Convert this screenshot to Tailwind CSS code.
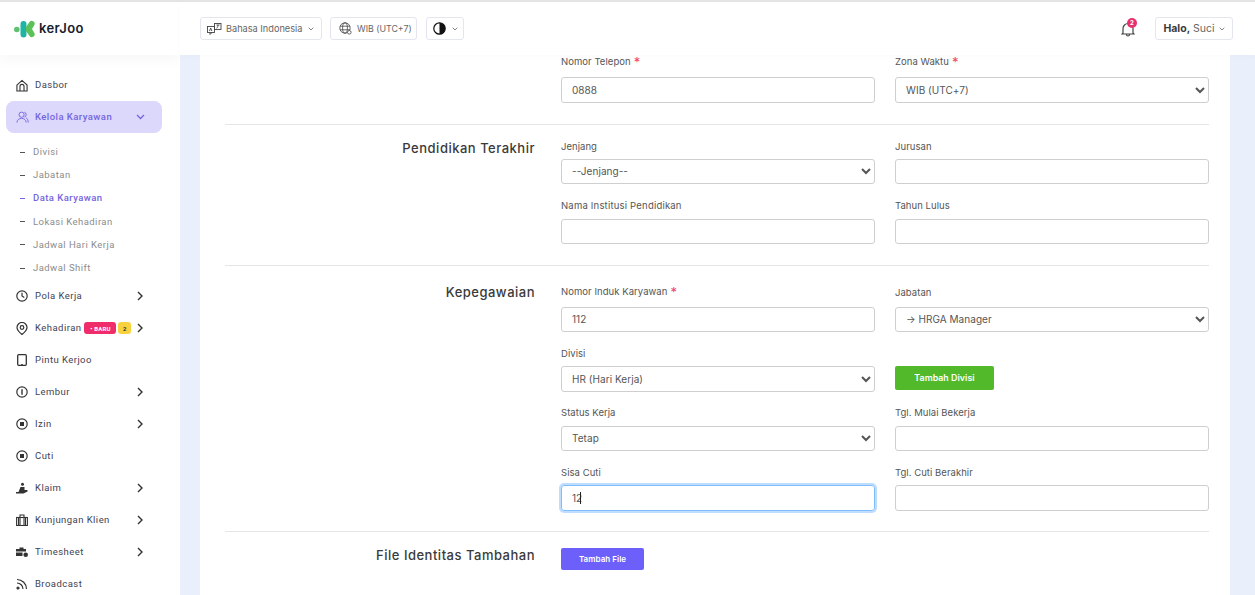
<!DOCTYPE html>
<html lang="id">
<head>
<meta charset="utf-8">
<title>Kerjoo</title>
<script src="https://cdn.jsdelivr.net/npm/@tailwindcss/browser@4"></script>
</head>
<body class="m-0 overflow-hidden bg-white font-['Inter',sans-serif]">
<div class="flex h-[595px] w-[1255px] flex-col overflow-hidden border-t-2 border-[#e4e4e4]">
<div class="flex min-h-0 flex-1">

<aside class="flex w-[180px] shrink-0 flex-col overflow-hidden bg-white font-['Roboto',sans-serif] text-[9.500px] tracking-[0.45px] text-[#3f4254]">
  <div class="flex h-[53px] shrink-0 items-center gap-[4px] pl-[14px] shadow-[0_6px_12px_rgba(0,0,0,0.03)]">
    <svg width="21" height="18" viewBox="0 0 21 18"><circle cx="2.800" cy="9.500" r="2.800" fill="#5fc16e"/><path d="M6.500 4a3 3 0 0 1 6 0v10.500a3 3 0 0 1-6 0z" fill="#1fb5a5"/><path d="M12 7l3.500-5a2.900 2.900 0 0 1 5 2.800L18 9l2.500 4.200a2.900 2.900 0 0 1-5 2.800L12 11z" fill="#5cc159"/></svg>
    <span class="font-['Inter',sans-serif] text-[13px] font-semibold tracking-[0.35px] text-[#16202c]">kerJoo</span>
  </div>
  <nav class="flex flex-col pt-[14px]">
    <a class="flex h-[32px] items-center pl-[16px]"><svg class="mr-[7px]" width="12" height="13" viewBox="0 0 13 14" fill="none" stroke="#333" stroke-width="1.200"><path d="M1 6.500 6.500 1.500 12 6.500V13H1zM4.300 13V8a2.200 2.200 0 0 1 4.400 0v5"/></svg>Dasbor</a>
    <a class="ml-[6px] mr-[18px] flex h-[32px] items-center rounded-[8px] bg-[#dcd8fb] pl-[10px] font-medium text-[#7465e0]"><svg class="mr-[6px]" width="13" height="12" viewBox="0 0 14 13" fill="none" stroke="#7465e0" stroke-width="1"><circle cx="6" cy="4" r="2.800"/><path d="M1 12.500c0-6 10-6 10 0M9 1.300a2.800 2.800 0 0 1 0 5.400M11 7.500c1.300.7 2.200 2.500 2.200 5"/></svg><span class="flex-1">Kelola Karyawan</span><svg class="mr-[17px]" width="9" height="6" viewBox="0 0 9 6" fill="none" stroke="#7465e0" stroke-width="1.300"><path d="M1 1l3.500 3.500L8 1"/></svg></a>
    <ul class="flex flex-col pb-[0.500px] pt-[7.500px] text-[#8c8c8c]">
      <li class="flex h-[23.200px] items-center gap-[8px] pl-[20px]"><span class="h-px w-[5px] bg-[#555]"></span>Divisi</li>
      <li class="flex h-[23.200px] items-center gap-[8px] pl-[20px]"><span class="h-px w-[5px] bg-[#555]"></span>Jabatan</li>
      <li class="flex h-[23.200px] items-center gap-[8px] pl-[20px] font-medium text-[#7465e0]"><span class="h-px w-[5px] bg-[#7465e0]"></span>Data Karyawan</li>
      <li class="flex h-[23.200px] items-center gap-[8px] pl-[20px]"><span class="h-px w-[5px] bg-[#555]"></span>Lokasi Kehadiran</li>
      <li class="flex h-[23.200px] items-center gap-[8px] pl-[20px]"><span class="h-px w-[5px] bg-[#555]"></span>Jadwal Hari Kerja</li>
      <li class="flex h-[23.200px] items-center gap-[8px] pl-[20px]"><span class="h-px w-[5px] bg-[#555]"></span>Jadwal Shift</li>
    </ul>
    <a class="flex h-[32px] items-center pl-[16px]"><svg class="mr-[7px]" width="12" height="12" viewBox="0 0 12 12" fill="none" stroke="#333" stroke-width="1.200"><circle cx="6" cy="6" r="5.200"/><path d="M6 2.800V6l2.300 1.500"/></svg><span class="flex-1">Pola Kerja</span><svg class="mr-[37px]" width="6" height="10" viewBox="0 0 6 10" fill="none" stroke="#333" stroke-width="1.400"><path d="M1 1l4 4-4 4"/></svg></a>
    <a class="flex h-[32px] items-center pl-[16px]"><svg class="mr-[7px]" width="12" height="13" viewBox="0 0 12 13" fill="none" stroke="#333" stroke-width="1.200"><path d="M6 12.500C3 10 1 8 1 5.500a5 5 0 0 1 10 0C11 8 9 10 6 12.500z"/><circle cx="6" cy="5.500" r="1.800"/></svg><span>Kehadiran</span><span class="ml-[3px] flex h-[12px] w-[32px] items-center justify-center rounded-[3px] bg-[#ee2d6a] text-[6px] font-bold tracking-[0.2px] text-white">• BARU</span><span class="ml-[2px] flex h-[12px] w-[13px] items-center justify-center rounded-[3px] bg-[#f7d23e] text-[6px] font-bold text-[#333]">2</span><svg class="ml-[6px]" width="6" height="10" viewBox="0 0 6 10" fill="none" stroke="#333" stroke-width="1.400"><path d="M1 1l4 4-4 4"/></svg></a>
    <a class="flex h-[32px] items-center pl-[17px]"><svg class="mr-[8px]" width="10" height="12" viewBox="0 0 10 12" fill="none" stroke="#333" stroke-width="1.300"><rect x=".7" y=".7" width="8.600" height="10.600" rx="1"/><path d="M4 11.300h2" stroke-width="2"/></svg>Pintu Kerjoo</a>
    <a class="flex h-[32px] items-center pl-[16px]"><svg class="mr-[7px]" width="12" height="12" viewBox="0 0 12 12" fill="none" stroke="#333" stroke-width="1.200"><circle cx="6" cy="6" r="5.200"/><path d="M6 3.300v5.400" stroke-width="1.400"/></svg><span class="flex-1">Lembur</span><svg class="mr-[37px]" width="6" height="10" viewBox="0 0 6 10" fill="none" stroke="#333" stroke-width="1.400"><path d="M1 1l4 4-4 4"/></svg></a>
    <a class="flex h-[32px] items-center pl-[16px]"><svg class="mr-[7px]" width="12" height="12" viewBox="0 0 12 12" fill="none" stroke="#333" stroke-width="1.200"><circle cx="6" cy="6" r="5.200"/><rect x="4" y="4" width="4" height="4" fill="#333" stroke="none"/></svg><span class="flex-1">Izin</span><svg class="mr-[37px]" width="6" height="10" viewBox="0 0 6 10" fill="none" stroke="#333" stroke-width="1.400"><path d="M1 1l4 4-4 4"/></svg></a>
    <a class="flex h-[32px] items-center pl-[16px]"><svg class="mr-[7px]" width="12" height="12" viewBox="0 0 12 12" fill="none" stroke="#333" stroke-width="1.200"><circle cx="6" cy="6" r="5.200"/><rect x="4" y="4" width="4" height="4" fill="#333" stroke="none"/></svg>Cuti</a>
    <a class="flex h-[32px] items-center pl-[16px]"><svg class="mr-[7px]" width="12" height="12" viewBox="0 0 12 12" fill="#333"><circle cx="6.500" cy="2.200" r="1.500"/><path d="M4.500 5h4v3h3v1.500L7.500 11.500H0V10h2.500z"/></svg><span class="flex-1">Klaim</span><svg class="mr-[37px]" width="6" height="10" viewBox="0 0 6 10" fill="none" stroke="#333" stroke-width="1.400"><path d="M1 1l4 4-4 4"/></svg></a>
    <a class="flex h-[32px] items-center pl-[16px]"><svg class="mr-[7px]" width="12" height="12" viewBox="0 0 12 12" fill="none" stroke="#333" stroke-width="1.100"><rect x=".6" y="3.500" width="10.800" height="8"/><path d="M4 11.500V1h4v10.500M2.500 3.500v8M9.500 3.500v8"/></svg><span class="flex-1">Kunjungan Klien</span><svg class="mr-[37px]" width="6" height="10" viewBox="0 0 6 10" fill="none" stroke="#333" stroke-width="1.400"><path d="M1 1l4 4-4 4"/></svg></a>
    <a class="flex h-[32px] items-center pl-[16px]"><svg class="mr-[7px]" width="12" height="11" viewBox="0 0 12 11" fill="#333"><path d="M3.500 2V.5h4V2H10v2.500H0V2zM0 5.500h6.500V9H0z"/><circle cx="9.700" cy="7.700" r="2.300"/></svg><span class="flex-1">Timesheet</span><svg class="mr-[37px]" width="6" height="10" viewBox="0 0 6 10" fill="none" stroke="#333" stroke-width="1.400"><path d="M1 1l4 4-4 4"/></svg></a>
    <a class="flex h-[32px] items-center pl-[16px]"><svg class="mr-[7px]" width="12" height="12" viewBox="0 0 12 12" fill="none" stroke="#333" stroke-width="1.200"><path d="M1 1.500A9.500 9.500 0 0 1 10.500 11M1 5a6 6 0 0 1 6 6"/><circle cx="2" cy="10" r="1" fill="#333"/></svg>Broadcast</a>
  </nav>
</aside>

<div class="flex min-w-0 flex-1 flex-col bg-[#e9f0fb]">
  <header class="z-10 flex h-[53px] shrink-0 items-center bg-white pl-[20px] pr-[22px] text-[9.200px] text-[#666] shadow-[0_2px_6px_rgba(0,0,0,0.02)]">
    <button class="flex h-[23px] w-[122px] items-center gap-[4px] whitespace-nowrap rounded-[3px] border border-[#e4e6ef] pl-[6px]">
      <svg width="15" height="12" viewBox="0 0 15 12" fill="none" stroke="#444" stroke-width=".9"><rect x=".5" y="3.500" width="7" height="6"/><rect x="7.500" y=".5" width="6.500" height="6"/><path d="M2.500 8l1.200-3 1.200 3M9.500 2h3M11 2c0 2-1 3-1.500 3.300M3 9.500v2l2-2"/></svg>
      <span>Bahasa Indonesia</span>
      <svg class="ml-[2px]" width="6" height="4" viewBox="0 0 6 4" fill="none" stroke="#666" stroke-width=".8"><path d="M.7.700 3 3 5.300.7"/></svg>
    </button>
    <button class="ml-[8px] flex h-[23px] w-[87px] items-center gap-[5px] whitespace-nowrap rounded-[3px] border border-[#e4e6ef] pl-[8px] text-[8.800px]">
      <svg width="13" height="13" viewBox="0 0 13 13" fill="none" stroke="#444" stroke-width=".8"><circle cx="6" cy="6" r="5.200"/><ellipse cx="6" cy="6" rx="2.400" ry="5.200"/><path d="M1 4.200h10M1 7.800h10"/><circle cx="10.300" cy="10.300" r="1.800" fill="#fff"/></svg>
      <span>WIB (UTC+7)</span>
    </button>
    <button class="ml-[9px] flex h-[23px] w-[38px] items-center gap-[6px] rounded-[3px] border border-[#e4e6ef] pl-[6px]">
      <svg width="13" height="13" viewBox="0 0 13 13"><circle cx="6.500" cy="6.500" r="5.700" fill="#fff" stroke="#111" stroke-width="1.200"/><path d="M6.500 .8a5.700 5.700 0 0 1 0 11.400z" fill="#111"/></svg>
      <svg width="6" height="4" viewBox="0 0 6 4" fill="none" stroke="#666" stroke-width=".8"><path d="M.7.700 3 3 5.300.7"/></svg>
    </button>
    <div class="relative ml-auto mr-[20px] flex h-[16px] w-[15px] items-center justify-center">
      <svg width="14" height="16" viewBox="0 0 14 16" fill="none" stroke="#444" stroke-width="1.200"><path d="M2 12V7.500a5 5 0 0 1 10 0V12l1 1H1zM5.500 13.500a1.500 1.500 0 0 0 3 0"/></svg>
      <span class="absolute -right-[2px] -top-[3px] flex h-[10px] w-[10px] items-center justify-center rounded-full bg-[#e8316b] text-[6px] font-bold text-white">2</span>
    </div>
    <button class="flex h-[23px] w-[78px] items-center justify-center gap-[4px] rounded-[3px] border border-[#e4e6ef] text-[10.500px]">
      <span><b class="font-bold text-[#3b3b3b]">Halo,</b> Suci</span>
      <svg width="6" height="4" viewBox="0 0 6 4" fill="none" stroke="#666" stroke-width=".8"><path d="M.7.700 3 3 5.300.7"/></svg>
    </button>
  </header>

  <main class="ml-[20px] mr-[25px] min-h-0 flex-1 overflow-hidden bg-white pl-[25px] pr-[21px] text-[9.500px] tracking-[0.05px] text-[#555]">
    <section class="flex border-b border-[#e5e5e5] pb-[21px]">
      <div class="mr-[26px] w-[310px]"></div>
      <div class="grid w-[648px] grid-cols-2 gap-x-[20px]">
        <div>
          <div class="flex h-[22px] items-center pb-[7px]">Nomor Telepon<span class="ml-[3px] text-[13px] leading-none text-[#f1416c]">*</span></div>
          <input class="h-[25.500px] w-full rounded-[3px] border border-[#cfcfcf] px-[10px] text-[10px] text-[#555]" value="0888">
        </div>
        <div>
          <div class="flex h-[22px] items-center pb-[7px]">Zona Waktu<span class="ml-[3px] text-[13px] leading-none text-[#f1416c]">*</span></div>
          <select class="h-[25.500px] w-full rounded-[3px] border border-[#cfcfcf] bg-white px-[6px] text-[10px] text-[#555]"><option>WIB (UTC+7)</option></select>
        </div>
      </div>
    </section>

    <section class="flex border-b border-[#e5e5e5] pb-[20.500px] pt-[12px]">
      <h2 class="mr-[26px] w-[310px] pt-[2px] text-right text-[13px] font-medium leading-[18px] tracking-[0.5px] text-[#3a3a3a]">Pendidikan Terakhir</h2>
      <div class="grid w-[648px] grid-cols-2 gap-x-[20px] gap-y-[12.500px]">
        <div>
          <div class="flex h-[22px] items-center pb-[1px]">Jenjang</div>
          <select class="h-[25.500px] w-full rounded-[3px] border border-[#cfcfcf] bg-white px-[6px] text-[10px] text-[#555]"><option>--Jenjang--</option></select>
        </div>
        <div>
          <div class="flex h-[22px] items-center pb-[1px]">Jurusan</div>
          <input class="h-[25.500px] w-full rounded-[3px] border border-[#cfcfcf] px-[10px] text-[10px]">
        </div>
        <div>
          <div class="flex h-[22px] items-center pb-[2px] tracking-[0.2px]">Nama Institusi Pendidikan</div>
          <input class="h-[25.500px] w-full rounded-[3px] border border-[#cfcfcf] px-[10px] text-[10px]">
        </div>
        <div>
          <div class="flex h-[22px] items-center pb-[2px]">Tahun Lulus</div>
          <input class="h-[25.500px] w-full rounded-[3px] border border-[#cfcfcf] px-[10px] text-[10px]">
        </div>
      </div>
    </section>

    <section class="flex border-b border-[#e5e5e5] pb-[20.500px] pt-[19px]">
      <h2 class="mr-[26px] w-[310px] text-right text-[13px] font-medium leading-[14px] tracking-[0.5px] text-[#3a3a3a]">Kepegawaian</h2>
      <div class="grid w-[648px] grid-cols-2 gap-x-[20px] gap-y-[12px]">
        <div>
          <div class="flex h-[22px] items-center pb-[7px]">Nomor Induk Karyawan<span class="ml-[3px] text-[13px] leading-none text-[#f1416c]">*</span></div>
          <input class="h-[25.500px] w-full rounded-[3px] border border-[#cfcfcf] px-[10px] text-[10px] text-[#555]" value="112">
        </div>
        <div>
          <div class="flex h-[22px] items-center pb-[5px]">Jabatan</div>
          <select class="h-[25.500px] w-full rounded-[3px] border border-[#cfcfcf] bg-white px-[6px] text-[10px] text-[#555]"><option>→ HRGA Manager</option></select>
        </div>
        <div>
          <div class="flex h-[22px] items-center pb-[2px]">Divisi</div>
          <select class="h-[25.500px] w-full rounded-[3px] border border-[#cfcfcf] bg-white px-[6px] text-[10px] text-[#555]"><option>HR (Hari Kerja)</option></select>
        </div>
        <div class="pt-[22px]">
          <button class="h-[24px] w-[99px] rounded-[2px] bg-[#52b92a] text-[8.800px] font-semibold text-white">Tambah Divisi</button>
        </div>
        <div>
          <div class="flex h-[22px] items-center pb-[2px]">Status Kerja</div>
          <select class="h-[25.500px] w-full rounded-[3px] border border-[#cfcfcf] bg-white px-[6px] text-[10px] text-[#555]"><option>Tetap</option></select>
        </div>
        <div>
          <div class="flex h-[22px] items-center pb-[2px]">Tgl. Mulai Bekerja</div>
          <input class="h-[25.500px] w-full rounded-[3px] border border-[#cfcfcf] px-[10px] text-[10px]">
        </div>
        <div class="relative">
          <div class="flex h-[22px] items-center pb-[2px]">Sisa Cuti</div>
          <input class="h-[25.500px] w-full rounded-[3px] border border-[#80bdff] px-[10px] text-[10px] text-[#555] shadow-[0_0_0_2px_rgba(0,123,255,0.25)]" value="12">
          <span class="absolute left-[19px] top-[29px] h-[12px] w-px bg-[#222]"></span>
        </div>
        <div>
          <div class="flex h-[22px] items-center pb-[2px]">Tgl. Cuti Berakhir</div>
          <input class="h-[25.500px] w-full rounded-[3px] border border-[#cfcfcf] px-[10px] text-[10px]">
        </div>
      </div>
    </section>

    <section class="flex pt-[15px]">
      <h2 class="mr-[26px] w-[310px] text-right text-[13px] font-medium leading-[16px] tracking-[0.5px] text-[#3a3a3a]">File Identitas Tambahan</h2>
      <button class="mt-[1px] h-[22px] w-[83px] rounded-[2px] bg-[#6c5ffa] text-[8px] font-semibold text-white">Tambah File</button>
    </section>
  </main>
</div>
</div>
</div>
</body>
</html>
